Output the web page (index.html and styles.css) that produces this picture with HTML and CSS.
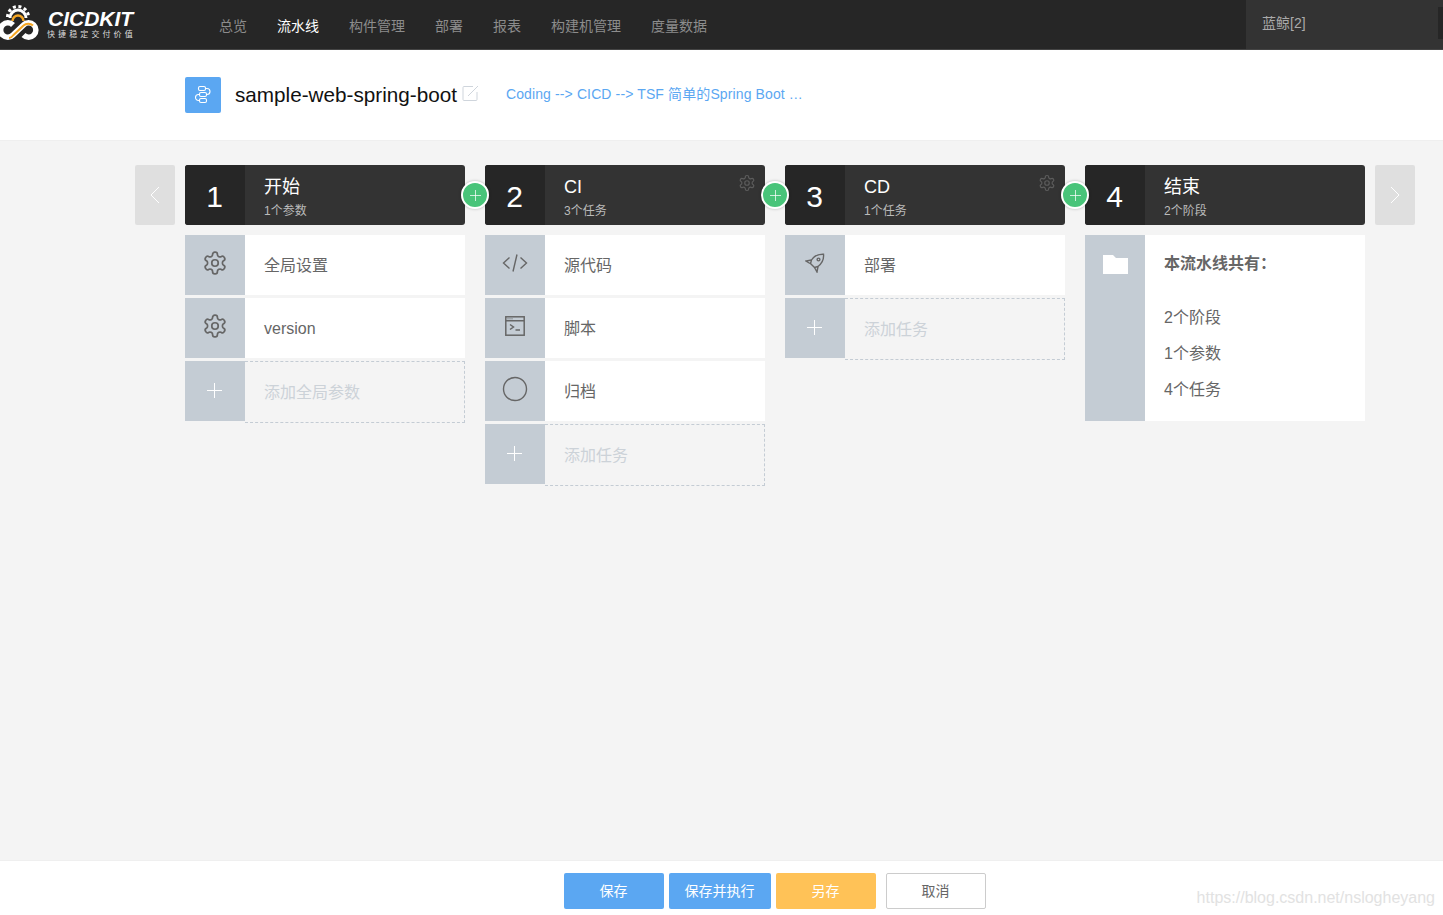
FILE: index.html
```html
<!DOCTYPE html>
<html lang="zh-CN">
<head>
  <meta charset="UTF-8" />
  <title>CICDKIT - 流水线</title>
  <link rel="stylesheet" href="styles.css">
</head>
<body>
  <svg class="sprites" width="0" height="0">
    <symbol id="gear" viewBox="0 0 24 24">
      <path fill="none" stroke="currentColor" stroke-width="1.600" d="M12.220 2h-.44a2 2 0 0 0-2 2v.18a2 2 0 0 1-1 1.730l-.43.25a2 2 0 0 1-2 0l-.15-.08a2 2 0 0 0-2.730.73l-.22.38a2 2 0 0 0 .73 2.730l.15.1a2 2 0 0 1 1 1.720v.51a2 2 0 0 1-1 1.740l-.15.09a2 2 0 0 0-.73 2.730l.22.38a2 2 0 0 0 2.730.73l.15-.08a2 2 0 0 1 2 0l.43.25a2 2 0 0 1 1 1.730V20a2 2 0 0 0 2 2h.44a2 2 0 0 0 2-2v-.18a2 2 0 0 1 1-1.730l.43-.25a2 2 0 0 1 2 0l.15.08a2 2 0 0 0 2.730-.73l.22-.39a2 2 0 0 0-.73-2.730l-.15-.08a2 2 0 0 1-1-1.740v-.5a2 2 0 0 1 1-1.740l.15-.09a2 2 0 0 0 .73-2.730l-.22-.38a2 2 0 0 0-2.730-.73l-.15.08a2 2 0 0 1-2 0l-.43-.25a2 2 0 0 1-1-1.730V4a2 2 0 0 0-2-2z"/>
      <circle cx="12" cy="12" r="3" fill="none" stroke="currentColor" stroke-width="1.600"/>
    </symbol>
    <symbol id="plus" viewBox="0 0 15 15">
      <path fill="none" stroke="currentColor" stroke-width="1" d="M7.500 0v15M0 7.500h15"/>
    </symbol>
  </svg>

  <!-- Top nav -->
  <header class="topbar">
    <a class="logo">
      <svg class="logo-mark" width="40" height="44" viewBox="0 0 40 44">
        <path fill="none" stroke="#fff" stroke-width="3" d="M11 16a8 8 0 0 1 16 0"/>
        <path fill="none" stroke="#fff" stroke-width="3" stroke-dasharray="3 2.600" d="M8.500 15a10.500 10.500 0 0 1 21 0"/>
        <path fill="none" stroke="#f5a623" stroke-width="2.500" d="M13.500 19a5.500 5.500 0 0 1 11 0"/>
        <path fill="none" stroke="#fff" stroke-width="5.500" d="M14 23a7.200 7.200 0 1 0 0 10l10.500-10a7.200 7.200 0 1 1 0 10"/>
        <path fill="none" stroke="#f5a623" stroke-width="2" d="M10 36c2 0 3-1 4.500-3l10-9.500c2.500-2.500 7-2.500 9.500 0"/>
      </svg>
      <span class="logo-text">
        <span class="logo-name">CICDKIT</span>
        <span class="logo-sub">快捷稳定交付价值</span>
      </span>
    </a>
    <nav class="nav">
      <a>总览</a>
      <a class="active">流水线</a>
      <a>构件管理</a>
      <a>部署</a>
      <a>报表</a>
      <a>构建机管理</a>
      <a>度量数据</a>
    </nav>
    <div class="user">蓝鲸[2]<span class="user-tab"></span></div>
  </header>

  <!-- Pipeline title -->
  <section class="title-bar">
    <span class="pipe-icon">
      <svg width="20" height="20" viewBox="0 0 20 20" fill="none" stroke="#fff" stroke-width="1.100">
        <rect x="5.500" y="1.500" width="7" height="4" rx="1.500"/>
        <rect x="6.500" y="7.500" width="7" height="4" rx="1.500"/>
        <rect x="6.500" y="13.500" width="7" height="4" rx="1.500"/>
        <path d="M12.500 3.500h1.500a3 3 0 0 1 3 3v0a3 3 0 0 1-3 3M6.500 9.500h-1a3 3 0 0 0-3 3v0a3 3 0 0 0 3 3h1"/>
      </svg>
    </span>
    <h1 class="pipe-name">sample-web-spring-boot</h1>
    <svg class="edit-icon" width="17" height="17" viewBox="0 0 17 17" fill="none" stroke="#cfd5dc" stroke-width="1">
      <path d="M11 1.500H2a1 1 0 0 0-1 1v12a1 1 0 0 0 1 1h12a1 1 0 0 0 1-1V7"/>
      <path d="M6 11 16 1"/>
    </svg>
    <span class="pipe-desc">Coding --&gt; CICD --&gt; TSF 简单的Spring Boot …</span>
  </section>

  <!-- Stages -->
  <main class="stages">
    <button class="arrow"><svg width="10" height="18" viewBox="0 0 10 18"><path fill="none" stroke="#fff" d="M9 1 1 9l8 8"/></svg></button>

    <div class="stage">
      <div class="stage-head">
        <span class="stage-num">1</span>
        <div class="stage-info"><h2>开始</h2><p>1个参数</p></div>
        <span class="stage-add"><svg width="11" height="11"><use href="#plus"/></svg></span>
      </div>
      <div class="row">
        <span class="row-icon"><svg width="26" height="26"><use href="#gear"/></svg></span>
        <span class="row-text">全局设置</span>
      </div>
      <div class="row">
        <span class="row-icon"><svg width="26" height="26"><use href="#gear"/></svg></span>
        <span class="row-text">version</span>
      </div>
      <div class="row row-add">
        <span class="row-icon"><svg width="15" height="15"><use href="#plus"/></svg></span>
        <span class="row-text">添加全局参数</span>
      </div>
    </div>

    <div class="stage">
      <div class="stage-head">
        <span class="stage-num">2</span>
        <div class="stage-info"><h2>CI</h2><p>3个任务</p></div>
        <svg class="stage-gear" width="18" height="18"><use href="#gear"/></svg>
        <span class="stage-add"><svg width="11" height="11"><use href="#plus"/></svg></span>
      </div>
      <div class="row">
        <span class="row-icon">
          <svg width="26" height="20" viewBox="0 0 26 20" fill="none" stroke="currentColor" stroke-width="1.400"><path d="M7.500 4.500 1.500 10l6 5.500M18.500 4.500l6 5.500-6 5.500M15 1.500 11 18.500"/></svg>
        </span>
        <span class="row-text">源代码</span>
      </div>
      <div class="row">
        <span class="row-icon">
          <svg width="20" height="20" viewBox="0 0 20 20" fill="none" stroke="currentColor" stroke-width="1.500"><rect x=".8" y=".8" width="18.400" height="18.400"/><path d="M1 4.800h18M5 8.500l3.500 2.500L5 13.500M10.500 14h4.500"/><path stroke-width="1" stroke-dasharray="1 1" d="M2.500 2.800h5"/></svg>
        </span>
        <span class="row-text">脚本</span>
      </div>
      <div class="row">
        <span class="row-icon">
          <svg width="26" height="26" viewBox="0 0 26 26" fill="none" stroke="currentColor" stroke-width="1.400"><circle cx="13" cy="13" r="11.500"/></svg>
        </span>
        <span class="row-text">归档</span>
      </div>
      <div class="row row-add">
        <span class="row-icon"><svg width="15" height="15"><use href="#plus"/></svg></span>
        <span class="row-text">添加任务</span>
      </div>
    </div>

    <div class="stage">
      <div class="stage-head">
        <span class="stage-num">3</span>
        <div class="stage-info"><h2>CD</h2><p>1个任务</p></div>
        <svg class="stage-gear" width="18" height="18"><use href="#gear"/></svg>
        <span class="stage-add"><svg width="11" height="11"><use href="#plus"/></svg></span>
      </div>
      <div class="row">
        <span class="row-icon">
          <svg width="20" height="20" viewBox="0 0 20 20" fill="none" stroke="currentColor" stroke-width="1.400"><path d="M6.500 7C9 3 13.500 1 18.500 1.200 19 6 17 10.500 13 13.500l-3.500 1-4-4z"/><path d="M6.500 7 1 8l4 2.500M13 13.500 12 19l-2.500-4.500"/><circle cx="13.500" cy="6.500" r="1.400"/></svg>
        </span>
        <span class="row-text">部署</span>
      </div>
      <div class="row row-add">
        <span class="row-icon"><svg width="15" height="15"><use href="#plus"/></svg></span>
        <span class="row-text">添加任务</span>
      </div>
    </div>

    <div class="stage">
      <div class="stage-head">
        <span class="stage-num">4</span>
        <div class="stage-info"><h2>结束</h2><p>2个阶段</p></div>
      </div>
      <div class="summary">
        <span class="summary-icon">
          <svg width="25" height="20" viewBox="0 0 25 20"><path fill="#fff" d="M0 1h10l3 3h12v16H0z"/></svg>
        </span>
        <div class="summary-body">
          <h3>本流水线共有：</h3>
          <p>2个阶段</p>
          <p>1个参数</p>
          <p>4个任务</p>
        </div>
      </div>
    </div>

    <button class="arrow"><svg width="10" height="18" viewBox="0 0 10 18"><path fill="none" stroke="#fff" d="m1 1 8 8-8 8"/></svg></button>
  </main>

  <!-- Actions -->
  <footer class="actions">
    <button class="btn btn-blue">保存</button>
    <button class="btn btn-blue btn-wide">保存并执行</button>
    <button class="btn btn-orange">另存</button>
    <button class="btn btn-plain">取消</button>
    <span class="watermark">https://blog.csdn.net/nslogheyang</span>
  </footer>
</body>
</html>
```

FILE: styles.css
```css
* { margin: 0; padding: 0; box-sizing: border-box; }

body {
  font-family: "Liberation Sans", "Noto Sans CJK SC", sans-serif;
  background: #f4f4f4;
  color: #666;
  min-height: 100vh;
  display: flex;
  flex-direction: column;
}

.sprites { position: absolute; }

button { font-family: inherit; border: none; cursor: pointer; }

/* Top nav */
.topbar {
  height: 50px;
  flex: none;
  display: flex;
  background: #262626;
  border-bottom: 1px solid #444;
}

.logo {
  width: 219px;
  flex: none;
  display: flex;
  color: #fff;
}

.logo-mark { margin-top: 2px; margin-left: -1px; flex: none; }

.logo-text {
  display: flex;
  flex-direction: column;
  margin-left: 9px;
  padding-top: 7px;
}

.logo-name {
  font-size: 21px;
  line-height: 23px;
  font-weight: bold;
  font-style: italic;
}

.logo-sub {
  font-size: 8px;
  line-height: 9px;
  letter-spacing: 3.1px;
  color: #ddd;
  margin-left: -1px;
}

.nav {
  display: flex;
  gap: 30px;
  flex: 1;
  font-size: 14px;
  line-height: 52px;
  color: #8c8c8c;
}

.nav .active { color: #fff; }

.user {
  width: 197px;
  flex: none;
  position: relative;
  padding-left: 16px;
  background: #333;
  color: #aaa;
  font-size: 14px;
  line-height: 47px;
}

.user-tab {
  position: absolute;
  right: 0;
  top: 7px;
  width: 5px;
  height: 32px;
  background: #262626;
}

/* Pipeline title */
.title-bar {
  height: 91px;
  flex: none;
  display: flex;
  align-items: center;
  padding: 0 0 1px 185px;
  background: #fff;
  border-bottom: 1px solid #efefef;
}

.pipe-icon {
  width: 36px;
  height: 36px;
  display: flex;
  align-items: center;
  justify-content: center;
  background: #5ba7f2;
  border-radius: 2px;
}

.pipe-name {
  margin-left: 14px;
  font-size: 20.700px;
  font-weight: normal;
  color: #111;
}

.edit-icon { margin: 0 0 2px 5px; }

.pipe-desc {
  margin: 0 0 3px 27px;
  font-size: 14px;
  letter-spacing: 0.120px;
  color: #5ba7f2;
}

/* Stages */
.stages {
  flex: 1;
  display: flex;
  align-items: flex-start;
  gap: 20px;
  padding: 24px 0 0 135px;
}

.arrow {
  width: 40px;
  height: 60px;
  flex: none;
  display: flex;
  align-items: center;
  justify-content: center;
  background: #dfdfdf;
  border-radius: 2px;
  margin-right: -10px;
}

.stage + .arrow { margin: 0 0 0 -10px; }

.stage {
  width: 280px;
  flex: none;
  display: flex;
  flex-direction: column;
  gap: 3px;
}

.stage-head {
  height: 60px;
  display: flex;
  position: relative;
  margin-bottom: 7px;
  background: #333;
  border-radius: 3px;
  color: #fff;
}

.stage-num {
  width: 60px;
  display: flex;
  align-items: center;
  justify-content: center;
  padding: 3px 1px 0 0;
  background: #262626;
  border-radius: 3px 0 0 3px;
  font-size: 30px;
}

.stage-info { padding: 9px 0 0 19px; }

.stage-info h2 {
  font-size: 18px;
  line-height: 26px;
  font-weight: normal;
}

.stage-info p {
  font-size: 12px;
  line-height: 18px;
  color: #bbb;
  margin-top: 2px;
}

.stage-gear {
  position: absolute;
  right: 9px;
  top: 9px;
  color: #5c5c5c;
}

.stage-add {
  position: absolute;
  right: -24px;
  top: 16px;
  width: 28px;
  height: 28px;
  display: flex;
  align-items: center;
  justify-content: center;
  background: #48c479;
  border: 2px solid #fff;
  border-radius: 50%;
  box-shadow: 0 0 3px rgba(0, 0, 0, 0.25);
  color: #fff;
  z-index: 1;
}

.row {
  height: 60px;
  display: flex;
  background: #fff;
}

.row-icon {
  width: 60px;
  height: 60px;
  flex: none;
  display: flex;
  align-items: center;
  justify-content: center;
  padding: 0 1px 4px 0;
  background: #c4ccd4;
  color: #666;
}

.row-text {
  padding-left: 19px;
  font-size: 16px;
  line-height: 62px;
}

.row-add {
  height: 62px;
  background: none;
}

.row-add .row-icon { color: #fff; padding-bottom: 2px; }

.row-add .row-text {
  flex: 1;
  border: 1px dashed #c4ccd4;
  border-left: none;
  color: #ccd2d8;
  line-height: 62px;
}

.summary {
  height: 186px;
  display: flex;
  background: #fff;
}

.summary-icon {
  width: 60px;
  flex: none;
  display: flex;
  justify-content: center;
  padding-top: 19px;
  background: #c4ccd4;
}

.summary-body { padding: 16px 0 0 19px; font-size: 16px; }

.summary-body h3 {
  font-size: 16px;
  line-height: 26px;
  margin-bottom: 23px;
}

.summary-body p { line-height: 36px; }

/* Actions */
.actions {
  height: 55px;
  flex: none;
  display: flex;
  position: relative;
  gap: 5px;
  padding: 12px 0 0 564px;
  background: #fff;
  border-top: 1px solid #efefef;
}

.btn {
  width: 100px;
  height: 36px;
  padding: 0 1px 2px 0;
  border-radius: 2px;
  font-size: 14px;
  color: #fff;
}

.btn-wide { width: 102px; }
.btn-blue { background: #5ba7f2; }
.btn-orange { background: #ffc257; }

.btn-plain {
  margin-left: 5px;
  background: #fff;
  border: 1px solid #ccc;
  color: #666;
}

.watermark {
  position: absolute;
  right: 8px;
  bottom: 8px;
  font-size: 16px;
  color: #e2e2e2;
}
```
